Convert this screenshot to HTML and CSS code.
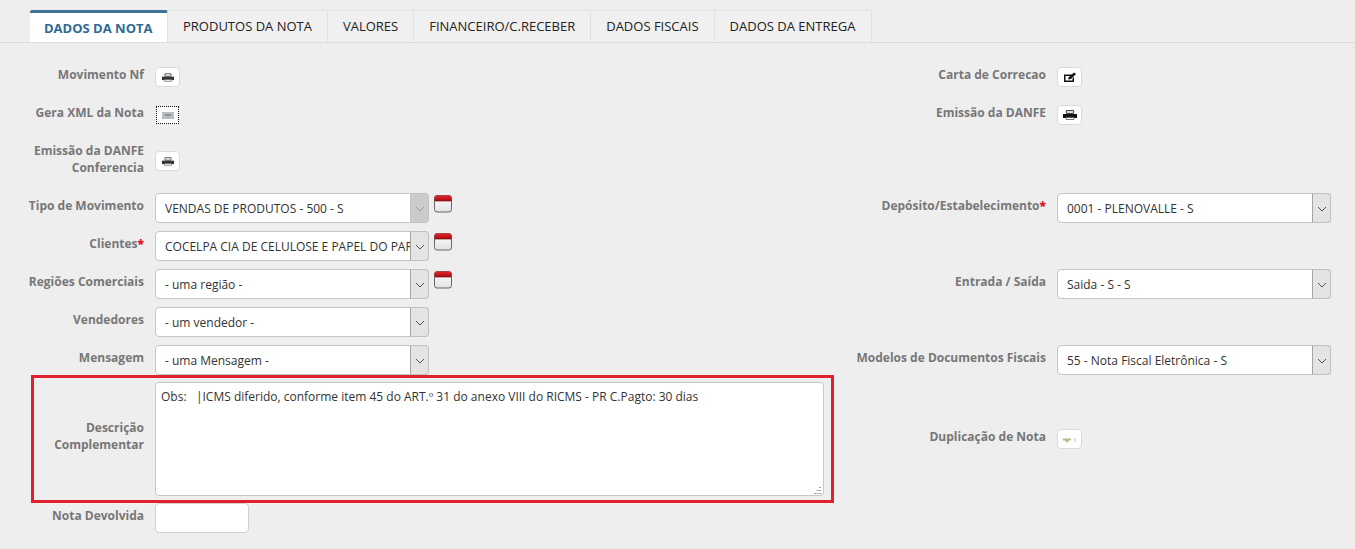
FILE: index.html
```html
<!DOCTYPE html>
<html lang="pt-BR">
<head>
<meta charset="utf-8">
<title>Dados da Nota</title>
<link rel="stylesheet" href="styles.css">
</head>
<body>
<svg class="defs" width="0" height="0" aria-hidden="true">
  <defs>
    <linearGradient id="calred" x1="0" y1="0" x2="0" y2="1">
      <stop offset="0" stop-color="#e8252b"/>
      <stop offset="1" stop-color="#a80a10"/>
    </linearGradient>
    <linearGradient id="calbody" x1="0" y1="0" x2="0" y2="1">
      <stop offset="0" stop-color="#ffffff"/>
      <stop offset="1" stop-color="#e2e2e2"/>
    </linearGradient>
  </defs>
  <symbol id="printer" viewBox="0 0 14 10">
    <path d="M3.500 0.500h7v3h-7z" fill="#fff" stroke="#444" stroke-width="1"/>
    <path d="M2 2h10" stroke="#888" stroke-width="0.600"/>
    <path d="M0 4h14v4H0z" fill="#111"/>
    <path d="M3 7.500h8v2H3z" fill="#fff" stroke="#555" stroke-width="0.800"/>
  </symbol>
  <symbol id="calendar" viewBox="0 0 18 18">
    <rect x="0.500" y="0.500" width="17" height="16.500" rx="2.500" fill="url(#calbody)" stroke="#666"/>
    <path d="M0.500 6V3A2.500 2.500 0 0 1 3 0.500h12A2.500 2.500 0 0 1 17.500 3v3z" fill="url(#calred)"/>
    <path d="M1 6h16" stroke="#7d1015" stroke-width="0.700"/>
  </symbol>
</svg>

<nav class="tabs">
  <a class="tab active">DADOS DA NOTA</a>
  <a class="tab">PRODUTOS DA NOTA</a>
  <a class="tab">VALORES</a>
  <a class="tab">FINANCEIRO/C.RECEBER</a>
  <a class="tab">DADOS FISCAIS</a>
  <a class="tab">DADOS DA ENTREGA</a>
</nav>

<form class="form">
  <div class="row r-btn">
    <div class="field">
      <label class="lbl">Movimento Nf</label>
      <button type="button" class="ibtn"><svg class="ico-s"><use href="#printer"/></svg></button>
    </div>
    <div class="field">
      <label class="lbl">Carta de Correcao</label>
      <button type="button" class="ibtn">
        <svg class="ico-m" viewBox="0 0 14 11"><path d="M1 2.500h8.500L8 4H2.500v4.500h7V6.500L11 5v5H1z" fill="#111"/><path d="M5 7.500l.8-2.300L11 0.500l2 1.500-5 5z" fill="#111"/></svg>
      </button>
    </div>
  </div>
  <div class="row r-btn">
    <div class="field">
      <label class="lbl">Gera XML da Nota</label>
      <button type="button" class="ibtn focus">
        <svg class="ico-x" viewBox="0 0 12 7"><rect x="0" y="0" width="12" height="7" fill="#b9bcbf"/><path d="M3 3h6" stroke="#666"/></svg>
      </button>
    </div>
    <div class="field">
      <label class="lbl">Emissão da DANFE</label>
      <button type="button" class="ibtn"><svg class="ico-l"><use href="#printer"/></svg></button>
    </div>
  </div>
  <div class="row r-tall">
    <div class="field">
      <label class="lbl">Emissão da DANFE<br>Conferencia</label>
      <button type="button" class="ibtn"><svg class="ico-s"><use href="#printer"/></svg></button>
    </div>
    <div class="field"></div>
  </div>
  <div class="row">
    <div class="field">
      <label class="lbl">Tipo de Movimento</label>
      <span class="sel disabled"><select disabled><option>VENDAS DE PRODUTOS - 500 - S</option></select><svg class="arrow" viewBox="0 0 10 6"><path d="M1 1l4 4 4-4" fill="none" stroke="#999"/></svg></span>
      <svg class="cal"><use href="#calendar"/></svg>
    </div>
    <div class="field">
      <label class="lbl">Depósito/Estabelecimento<b>*</b></label>
      <span class="sel"><select><option>0001 - PLENOVALLE - S</option></select><svg class="arrow" viewBox="0 0 10 6"><path d="M1 1l4 4 4-4" fill="none" stroke="#555"/></svg></span>
    </div>
  </div>
  <div class="row">
    <div class="field">
      <label class="lbl">Clientes<b>*</b></label>
      <span class="sel"><select><option>COCELPA CIA DE CELULOSE E PAPEL DO PARANA</option></select><svg class="arrow" viewBox="0 0 10 6"><path d="M1 1l4 4 4-4" fill="none" stroke="#555"/></svg></span>
      <svg class="cal"><use href="#calendar"/></svg>
    </div>
    <div class="field"></div>
  </div>
  <div class="row">
    <div class="field">
      <label class="lbl">Regiões Comerciais</label>
      <span class="sel"><select><option>- uma região -</option></select><svg class="arrow" viewBox="0 0 10 6"><path d="M1 1l4 4 4-4" fill="none" stroke="#555"/></svg></span>
      <svg class="cal"><use href="#calendar"/></svg>
    </div>
    <div class="field">
      <label class="lbl">Entrada / Saída</label>
      <span class="sel"><select><option>Saida - S - S</option></select><svg class="arrow" viewBox="0 0 10 6"><path d="M1 1l4 4 4-4" fill="none" stroke="#555"/></svg></span>
    </div>
  </div>
  <div class="row">
    <div class="field">
      <label class="lbl">Vendedores</label>
      <span class="sel"><select><option>- um vendedor -</option></select><svg class="arrow" viewBox="0 0 10 6"><path d="M1 1l4 4 4-4" fill="none" stroke="#555"/></svg></span>
    </div>
    <div class="field"></div>
  </div>
  <div class="row r-short">
    <div class="field">
      <label class="lbl">Mensagem</label>
      <span class="sel"><select><option>- uma Mensagem -</option></select><svg class="arrow" viewBox="0 0 10 6"><path d="M1 1l4 4 4-4" fill="none" stroke="#555"/></svg></span>
    </div>
    <div class="field">
      <label class="lbl">Modelos de Documentos Fiscais</label>
      <span class="sel"><select><option>55 - Nota Fiscal Eletrônica - S</option></select><svg class="arrow" viewBox="0 0 10 6"><path d="M1 1l4 4 4-4" fill="none" stroke="#555"/></svg></span>
    </div>
  </div>
  <div class="row r-text">
    <div class="field center">
      <label class="lbl">Descrição<br>Complementar</label>
      <span class="area-wrap">
        <textarea class="area">Obs:   |ICMS diferido, conforme item 45 do ART.º 31 do anexo VIII do RICMS - PR C.Pagto: 30 dias</textarea>
        <svg class="grip" viewBox="0 0 8 7"><path d="M6 0h2v1H6zM3.500 3H5.500v1h-2zM6 3h2v1H6zM1 6h2v1H1zM3.500 6h2v1h-2zM6 6h2v1H6z" fill="#9a9a9a"/></svg>
      </span>
    </div>
    <div class="field center">
      <label class="lbl">Duplicação de Nota</label>
      <button type="button" class="ibtn">
        <svg class="ico-d" viewBox="0 0 14 7"><path d="M0 2.500h8v2H6L4 7 2 4.500H0z" fill="#a6c48c"/><path d="M12 2v4" stroke="#c4c4c4"/></svg>
      </button>
    </div>
  </div>
  <div class="row">
    <div class="field">
      <label class="lbl">Nota Devolvida</label>
      <input class="txt" type="text">
    </div>
    <div class="field"></div>
  </div>
  <div class="mark"></div>
</form>
</body>
</html>
```

FILE: styles.css
```css
* { box-sizing: border-box; }
html, body { margin: 0; height: 549px; overflow: hidden; }
body {
  background: #eeeeee;
  font-family: "Open Sans", "Liberation Sans", sans-serif;
  font-size: 12px;
  color: #333;
}
.defs { position: absolute; }

.tabs {
  display: flex;
  height: 43px;
  padding: 10px 0 0 30px;
  border-bottom: 1px solid #dddddd;
}
.tab {
  height: 32px;
  padding: 6px 15px 0;
  font-size: 13px;
  line-height: 18px;
  color: #222;
  background: #f0f0f0;
  border: 1px solid #e2e2e2;
  border-bottom: 0;
  border-left: 0;
}
.tab:last-child { padding-right: 16px; }
.tab.active {
  width: 138px;
  padding: 6px 14px 0;
  font-weight: 700;
  color: #2f6b94;
  background: #fff;
  border: 0;
  border-top: 3px solid #3e7396;
  border-right: 1px solid #e2e2e2;
  border-radius: 2px 2px 0 0;
}

.form { position: relative; padding-top: 24px; }
.row {
  display: grid;
  grid-template-columns: 846px 1fr;
  height: 38px;
}
.r-tall { height: 50px; }
.r-short { height: 37px; }
.r-text { height: 114px; margin-bottom: 7px; }
.field { display: flex; align-items: flex-start; }
.field.center { align-items: center; }

.lbl {
  flex: none;
  width: 144px;
  margin: 4px 11px 0 0;
  text-align: right;
  white-space: nowrap;
  font-size: 12px;
  line-height: 17px;
  font-weight: 700;
  color: #777;
}
.field + .field .lbl { width: 200px; }
.r-btn .lbl { margin-top: -1px; }
.r-tall .lbl { margin-top: -1px; }
.field.center .lbl { margin-top: -6px; }
.lbl b { color: #e0141f; }

.ibtn {
  display: flex;
  align-items: center;
  justify-content: center;
  flex: none;
  width: 25px;
  height: 20px;
  padding: 0;
  background: #fff;
  border: 1px solid #dadada;
  border-radius: 4px;
}
.r-tall .ibtn { margin-top: 8px; }
.ibtn.focus {
  width: 23px;
  height: 18px;
  margin: 1px;
  border: 1px dotted #111;
  border-radius: 0;
  background: #fafcfd;
}
.ico-s { width: 12px; height: 9px; opacity: 0.85; }
.ico-x { width: 12px; height: 7px; }
.ico-m { width: 14px; height: 11px; }
.ico-l { width: 14px; height: 10px; }
.ico-d { width: 14px; height: 7px; }

.sel {
  position: relative;
  display: block;
  flex: none;
  width: 274px;
  height: 30px;
  background: #fff;
  border: 1px solid #c6c6c6;
  border-radius: 4px;
}
.sel::after {
  content: "";
  position: absolute;
  top: -1px;
  right: -1px;
  bottom: -1px;
  width: 17px;
  background: #e4e4e4;
  border: 1px solid #c0c0c0;
  border-left-color: #a4a4a4;
  border-radius: 0 4px 4px 0;
}
.sel.disabled::after { background: #cbcbcb; border-color: #c4c4c4; }
.sel select {
  display: block;
  width: 100%;
  height: 28px;
  padding: 0 0 0 9px;
  border: 0;
  outline: 0;
  background: transparent;
  appearance: none;
  font-family: "Open Sans", "Liberation Sans", sans-serif;
  font-size: 12px;
  color: #333;
  opacity: 1;
}
.arrow {
  position: absolute;
  z-index: 1;
  top: 12px;
  right: 3px;
  width: 10px;
  height: 6px;
}
.cal { flex: none; width: 18px; height: 18px; margin: 2px 0 0 5px; }

.area-wrap {
  position: relative;
  display: block;
  flex: none;
  width: 669px;
  height: 114px;
}
.area {
  display: block;
  width: 100%;
  height: 100%;
  margin: 0;
  padding: 5px;
  resize: none;
  background: #fff;
  border: 1px solid #c6c6c6;
  border-radius: 4px;
  font-family: "Open Sans", "Liberation Sans", sans-serif;
  font-size: 12px;
  line-height: 17px;
  color: #333;
  white-space: pre-wrap;
}
.grip {
  position: absolute;
  right: 3px;
  bottom: 2px;
  width: 8px;
  height: 7px;
}
.txt {
  flex: none;
  width: 94px;
  height: 30px;
  background: #fff;
  border: 1px solid #d2d2d2;
  border-radius: 4px;
}

.mark {
  position: absolute;
  left: 31px;
  top: 332px;
  width: 803px;
  height: 128px;
  border: 3px solid #e0202c;
  pointer-events: none;
}
```
